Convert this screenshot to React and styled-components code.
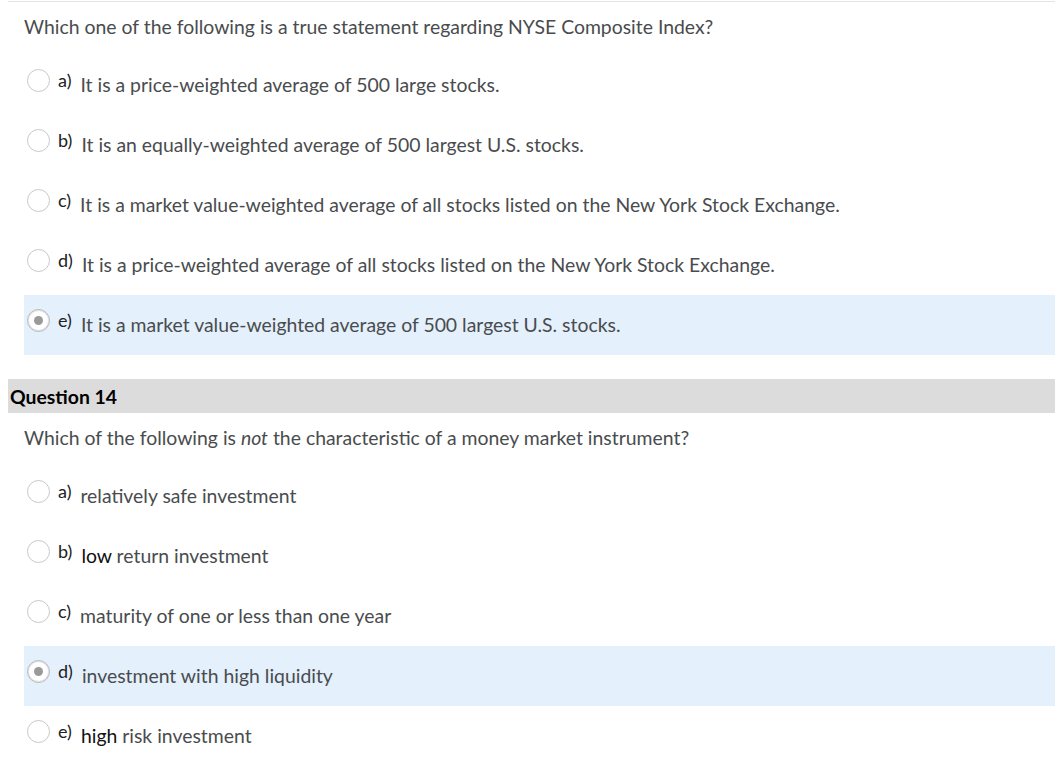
import React from "react"
import styled, { createGlobalStyle } from "styled-components"

const Global = createGlobalStyle`
  body {
    margin: 0;
    background: #fff;
    font-family: Lato, "Open Sans", sans-serif;
    color: #494c4e;
  }
`

const Page = styled.div`
  padding: 1px 0 0 8px;
`

const TopRule = styled.div`
  height: 1px;
  background: #e3e3e3;
`

const Block = styled.section`
  padding-left: 16px;
`

const Prompt = styled.p`
  margin: 0;
  padding: 14px 0 17px;
  font-size: 19.4px;
  line-height: 22px;
  em {
    font-style: italic;
  }
`

const Options = styled.div`
  display: flex;
  flex-direction: column;
`

const Row = styled.label`
  display: flex;
  align-items: center;
  height: 60px;
  padding-left: 3px;
  background: ${p => (p.$picked ? "#e4f0fc" : "transparent")};
`

const Radio = styled.span`
  flex: none;
  box-sizing: border-box;
  width: 23px;
  height: 23px;
  border-radius: 50%;
  border: 1px solid ${p => (p.$picked ? "#b5b8bb" : "#c6c9cc")};
  background: #fff;
  display: flex;
  align-items: center;
  justify-content: center;
  margin-bottom: 10px;
  box-shadow: ${p => (p.$picked ? "inset 0 0 0 1px #e2e2e2" : "none")};
  &::after {
    content: "";
    width: 9px;
    height: 9px;
    border-radius: 50%;
    background: ${p => (p.$picked ? "#9a9a9a" : "transparent")};
  }
`

const Letter = styled.span`
  font-size: 18px;
  line-height: 20px;
  margin: 0 9px 10px 8px;
  color: #202122;
`

const Answer = styled.span`
  font-size: 19.4px;
  line-height: 22px;
  b {
    font-weight: normal;
    color: #111;
  }
`

const Header = styled.h2`
  margin: 24px 0 0;
  height: 34px;
  display: flex;
  align-items: center;
  padding-left: 2px;
  background: #dcdcdc;
  color: #000;
  font-size: 19.4px;
  font-weight: bold;
`

const first = [
  ["a)", "It is a price-weighted average of 500 large stocks."],
  ["b)", "It is an equally-weighted average of 500 largest U.S. stocks."],
  ["c)", "It is a market value-weighted average of all stocks listed on the New York Stock Exchange."],
  ["d)", "It is a price-weighted average of all stocks listed on the New York Stock Exchange."],
  ["e)", "It is a market value-weighted average of 500 largest U.S. stocks."],
]

const second = [
  ["a)", "relatively safe investment"],
  ["b)", <><b>low</b> return investment</>],
  ["c)", "maturity of one or less than one year"],
  ["d)", "investment with high liquidity"],
  ["e)", <><b>high</b> risk investment</>],
]

const Question = ({ prompt, items, picked }) => (
  <Block>
    <Prompt>{prompt}</Prompt>
    <Options>
      {items.map(([letter, text], i) => (
        <Row key={letter} $picked={i === picked}>
          <Radio $picked={i === picked} />
          <Letter>{letter}</Letter>
          <Answer>{text}</Answer>
        </Row>
      ))}
    </Options>
  </Block>
)

export default function App() {
  return (
    <>
      <Global />
      <Page>
        <TopRule />
        <Question
          prompt="Which one of the following is a true statement regarding NYSE Composite Index?"
          items={first}
          picked={4}
        />
        <Header>Question 14</Header>
        <Question
          prompt={<>Which of the following is <em>not</em> the characteristic of a money market instrument?</>}
          items={second}
          picked={3}
        />
      </Page>
    </>
  )
}
